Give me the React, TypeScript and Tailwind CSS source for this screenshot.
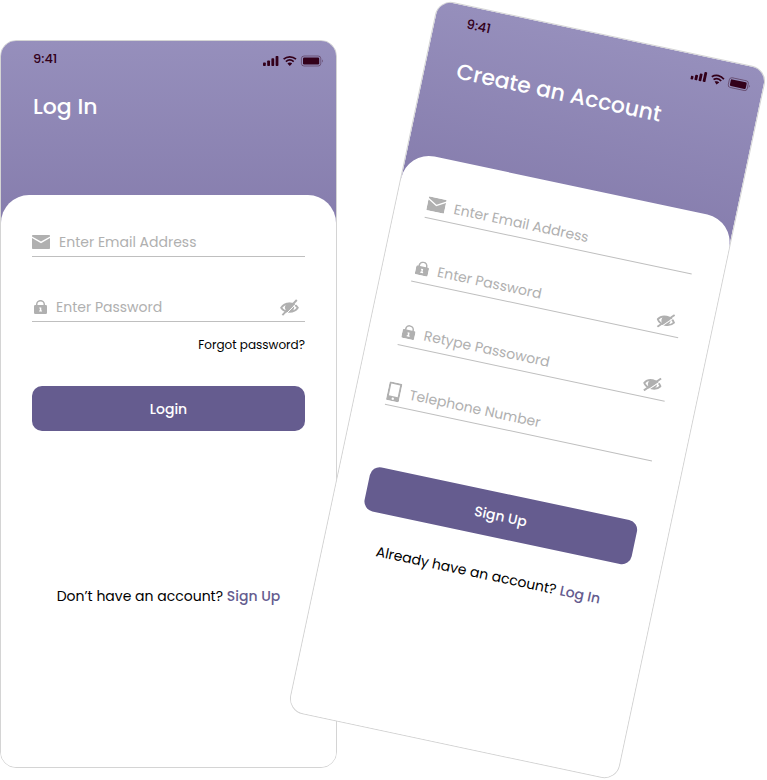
import type { ReactNode } from "react";

function StatusBar() {
  return (
    <div className="flex items-center justify-between pr-[13px] pl-8 text-[#33001a]">
      <span className="text-[13px] leading-5 font-medium">9:41</span>
      <svg width="60" height="12" viewBox="0 0 60 12" fill="none" className="mt-1" aria-hidden="true">
        <g fill="currentColor">
          <rect x="0" y="7.5" width="2.8" height="3.5" rx="0.8" />
          <rect x="4.2" y="5.5" width="2.8" height="5.5" rx="0.8" />
          <rect x="8.4" y="3.3" width="2.8" height="7.7" rx="0.8" />
          <rect x="12.6" y="1" width="2.8" height="10" rx="0.8" />
          <rect x="40" y="2.6" width="16.2" height="6.8" rx="1.2" />
          <path d="M59 4.6c.9.4 1 2.2 0 2.8z" opacity="0.5" />
          <path d="M26.8 7.6c1 0 1.8.3 2.4.8L26.8 11l-2.4-2.6c.6-.5 1.4-.8 2.4-.8z" />
        </g>
        <path d="M20.6 4.2c3.6-3.2 8.8-3.2 12.4 0M22.9 6.6c2.3-2 5.5-2 7.8 0" stroke="currentColor" strokeWidth="1.7" />
        <rect x="38.4" y="1" width="19.4" height="10" rx="2.6" stroke="currentColor" strokeWidth="0.8" opacity="0.5" />
      </svg>
    </div>
  );
}

function MailIcon() {
  return (
    <svg width="18" height="14" viewBox="0 0 18 14" fill="currentColor" aria-hidden="true">
      <path d="M0 .6C0 .2.3 0 .7 0h16.6c.4 0 .7.2.7.6v.9L9 6.6 0 1.5z" />
      <path d="M0 3l9 5.2L18 3v10.2c0 .5-.3.8-.8.8H.8c-.5 0-.8-.3-.8-.8z" />
    </svg>
  );
}

function LockIcon() {
  return (
    <svg width="13" height="14" viewBox="0 0 13 14" aria-hidden="true">
      <path d="M2.7 6V4.5a3.8 3.8 0 0 1 7.6 0V6" fill="none" stroke="currentColor" strokeWidth="1.5" />
      <rect y="5" width="13" height="9" rx="1.3" fill="currentColor" />
      <path d="M5.3 7.4h2v3h.7v1.2H5.1v-1.2h.8V8.6h-.6z" fill="#fff" />
    </svg>
  );
}

function PhoneIcon() {
  return (
    <svg width="13" height="19" viewBox="0 0 13 19" aria-hidden="true">
      <path
        fill="currentColor"
        fillRule="evenodd"
        d="M1.2 0h10.6c.7 0 1.2.5 1.2 1.2v16.6c0 .7-.5 1.2-1.2 1.2H1.2C.5 19 0 18.5 0 17.8V1.2C0 .5.5 0 1.2 0zM2 2v12h9V2zM6.5 15.3a1.2 1.2 0 1 0 0 2.4 1.2 1.2 0 0 0 0-2.4z"
      />
    </svg>
  );
}

function EyeOffIcon() {
  return (
    <svg width="19" height="17" viewBox="0 0 19 17" fill="none" aria-hidden="true">
      <path d="M1.2 8.7C4.6 3 14.4 3 17.8 8.7 14.4 14 4.6 14 1.2 8.7z" stroke="currentColor" strokeWidth="1.9" />
      <circle cx="9.5" cy="8.4" r="4.6" fill="currentColor" />
      <path d="M4.3 16.8 18.4 2.4" stroke="#fff" strokeWidth="1" />
      <path d="M2.4 16.2 16.8 1" stroke="currentColor" strokeWidth="1.9" />
    </svg>
  );
}

type FieldProps = {
  id: string;
  type: string;
  label: string;
  icon: ReactNode;
  spacing?: string;
};

function Field({ id, type, label, icon, spacing = "" }: FieldProps) {
  return (
    <div className={`flex h-[33px] items-center border-b border-[#bfbfbf] pt-1 text-[#b0b0b0] ${spacing}`}>
      <label htmlFor={id} aria-label={label} className="flex shrink-0 items-center">
        {icon}
      </label>
      <input
        id={id}
        type={type}
        placeholder={label}
        className="ml-[9px] h-7 w-full min-w-0 flex-1 bg-transparent text-sm leading-7 outline-none placeholder:text-[#b0b0b0]"
      />
      {type === "password" && (
        <button type="button" aria-label="Show password" className="mr-1.5 shrink-0">
          <EyeOffIcon />
        </button>
      )}
    </div>
  );
}

function PasswordField({ id, label }: { id: string; label: string }) {
  return <Field id={id} type="password" label={label} icon={<span className="ml-0.5"><LockIcon /></span>} spacing="mt-8" />;
}

function Phone({ title, className, children }: { title: string; className: string; children: ReactNode }) {
  return (
    <section
      className={`flex min-h-[728px] max-w-[337px] flex-1 flex-col overflow-hidden rounded-2xl border border-[#d4d4d4] bg-white ${className}`}
    >
      <header className="h-[182px] bg-linear-to-b from-[#968fbc] to-[#867dad] pt-2">
        <StatusBar />
        <h1 className="mt-5 pl-8 text-[22px] leading-9 font-medium text-white">{title}</h1>
      </header>
      <form className="-mt-7 flex flex-1 flex-col rounded-t-[28px] bg-white px-[31px] pt-[29px]">{children}</form>
    </section>
  );
}

const buttonStyle = "h-[45px] w-full shrink-0 rounded-[10px] bg-[#655c8f] text-sm font-medium text-white";
const linkStyle = "font-medium text-[#655c8f]";

export default function App() {
  return (
    <main className="flex items-start gap-[22px] overflow-hidden bg-white pr-[71px] pb-3 font-['Poppins','Inter',sans-serif]">
      <Phone title="Log In" className="mt-10">
        <Field id="login-email" type="email" label="Enter Email Address" icon={<MailIcon />} />
        <PasswordField id="login-password" label="Enter Password" />
        <a href="#forgot" className="mt-[15px] self-end text-xs leading-4 text-black">
          Forgot password?
        </a>
        <button type="submit" className={`mt-[33px] ${buttonStyle}`}>
          Login
        </button>
        <p className="mt-[155px] text-center text-sm leading-5 text-black">
          Don’t have an account?{" "}
          <a href="#signup" className={linkStyle}>
            Sign Up
          </a>
        </p>
      </Phone>
      <Phone title="Create an Account" className="mt-[26px] rotate-12">
        <Field id="signup-email" type="email" label="Enter Email Address" icon={<MailIcon />} />
        <PasswordField id="signup-password" label="Enter Password" />
        <PasswordField id="signup-retype" label="Retype Passoword" />
        <Field id="signup-phone" type="tel" label="Telephone Number" icon={<PhoneIcon />} spacing="mt-7" />
        <button type="submit" className={`mt-[62px] ${buttonStyle}`}>
          Sign Up
        </button>
        <p className="mt-7 text-center text-sm leading-5 text-black">
          Already have an account?{" "}
          <a href="#login" className={linkStyle}>
            Log In
          </a>
        </p>
      </Phone>
    </main>
  );
}
